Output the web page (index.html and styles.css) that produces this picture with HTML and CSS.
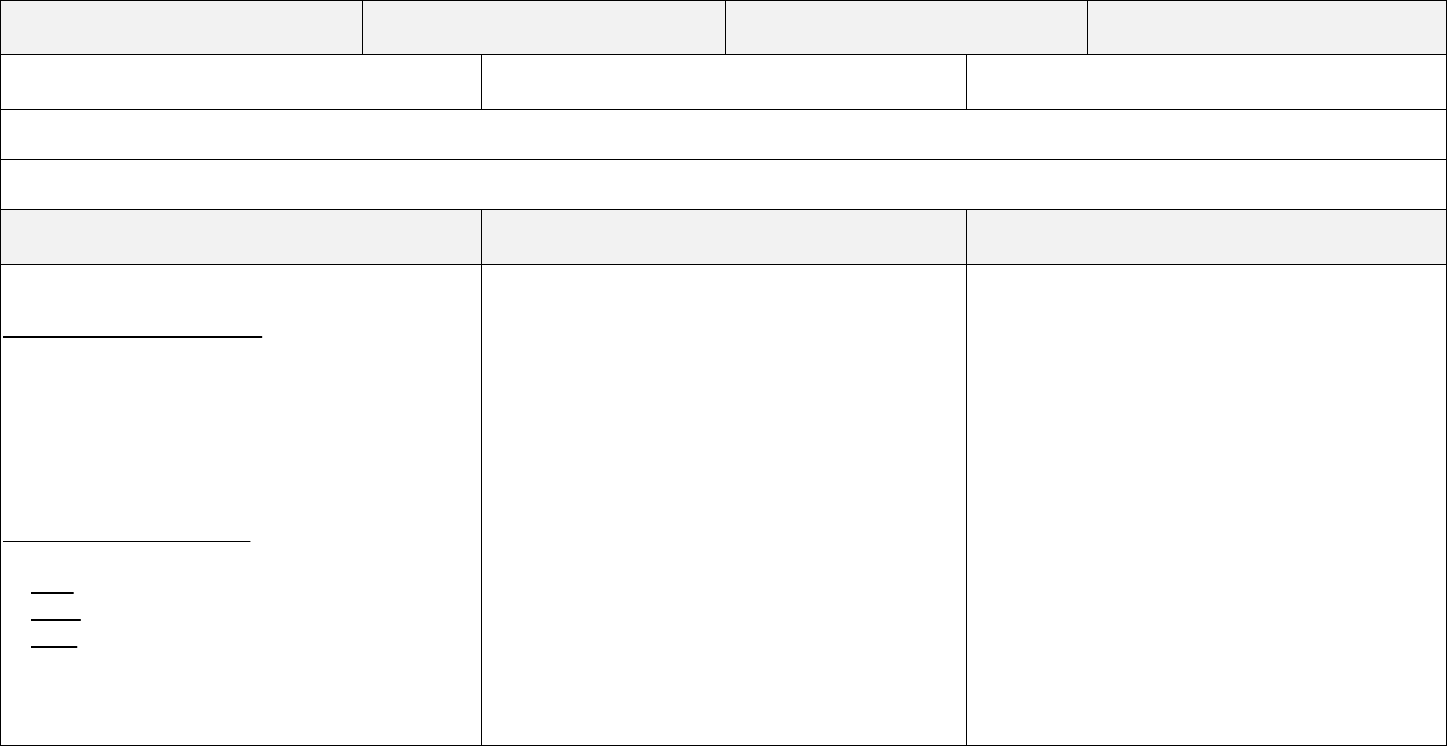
FILE: index.html
```html
<!DOCTYPE html>
<html lang="en">
<head>
  <meta charset="UTF-8">
  <meta name="viewport" content="width=device-width, initial-scale=1.0">
  <title>Community Board</title>
  <link rel="stylesheet" href="styles.css">
</head>
<body>
  <div class="sheet">
    <div class="row row-four head">
      <div class="cell">Home</div>
      <div class="cell">News</div>
      <div class="cell">Events</div>
      <div class="cell">Contact</div>
    </div>

    <div class="row row-three tall">
      <div class="cell">Monday</div>
      <div class="cell">Wednesday</div>
      <div class="cell">Friday</div>
    </div>

    <div class="row row-one">
      <div class="cell">Notice board updated weekly</div>
    </div>

    <div class="row row-one">
      <div class="cell">Please keep messages short and friendly</div>
    </div>

    <div class="row row-three head tall">
      <div class="cell">About</div>
      <div class="cell">Latest</div>
      <div class="cell">Archive</div>
    </div>

    <div class="row row-three main">
      <div class="cell block">
        <p class="intro">Hello and welcome.</p>
        <a href="#" class="title">Neighbourhood Notices and Events:</a>
        <p class="blurb">
          Meetings are held on the first Monday of the month.<br>
          Bring a friend, bring a snack.<br>
          Everyone is welcome.<br>
          Notices go up on Friday.<br>
          Ask at the desk for details.
        </p>
        <a href="#" class="subtitle">Useful links for our new members</a>
        <ul class="links">
          <li><a href="#">Home</a></li>
          <li><a href="#">Photos</a></li>
          <li><a href="#">Forum</a></li>
        </ul>
      </div>
      <div class="cell block">
        <p class="intro">Nothing new this week.</p>
      </div>
      <div class="cell block">
        <p class="intro">Older posts are kept here.</p>
      </div>
    </div>
  </div>
</body>
</html>
```

FILE: styles.css
```css
body {
  margin: 0;
  font-family: "Liberation Sans", Arial, sans-serif;
  font-size: 16px;
  color: #fff;
  background-color: #fff;
}
.sheet {
  width: 1447px;
  box-sizing: border-box;
  border-left: 1px solid #000;
  border-top: 1px solid #000;
}
.row {
  display: grid;
  height: 50px;
}
.row-four {
  grid-template-columns: 362px 363px 362px 359px;
}
.row-three {
  grid-template-columns: 481px 485px 480px;
}
.row-one {
  grid-template-columns: 1fr;
}
.row.head {
  height: 55px;
}
.row-four.head {
  height: 54px;
}
.row.tall {
  height: 55px;
}
.row.main {
  height: 481px;
}
.cell {
  box-sizing: border-box;
  border-right: 1px solid #000;
  border-bottom: 1px solid #000;
  padding: 0 2px;
  display: flex;
  align-items: center;
}
.head .cell {
  background-color: #f2f2f2;
  color: #f2f2f2;
}
.cell.block {
  display: block;
}
.block a {
  color: #fff;
  text-decoration: underline;
  text-decoration-color: #000;
  text-underline-offset: 3px;
}
.intro {
  margin: 16px 0 17px;
  line-height: 20px;
}
.title {
  display: block;
  width: max-content;
  line-height: 20px;
  word-spacing: 1px;
  text-decoration-thickness: 2px !important;
}
.blurb {
  margin: 26px 0 49px;
  line-height: 22px;
}
.subtitle {
  display: block;
  width: max-content;
  line-height: 20px;
  word-spacing: 2px;
  text-decoration-thickness: 1px;
}
.links {
  margin: 27px 0 0;
  padding-left: 28px;
}
.links li {
  line-height: 27px;
}
.links a {
  text-decoration-thickness: 2px;
}
```
